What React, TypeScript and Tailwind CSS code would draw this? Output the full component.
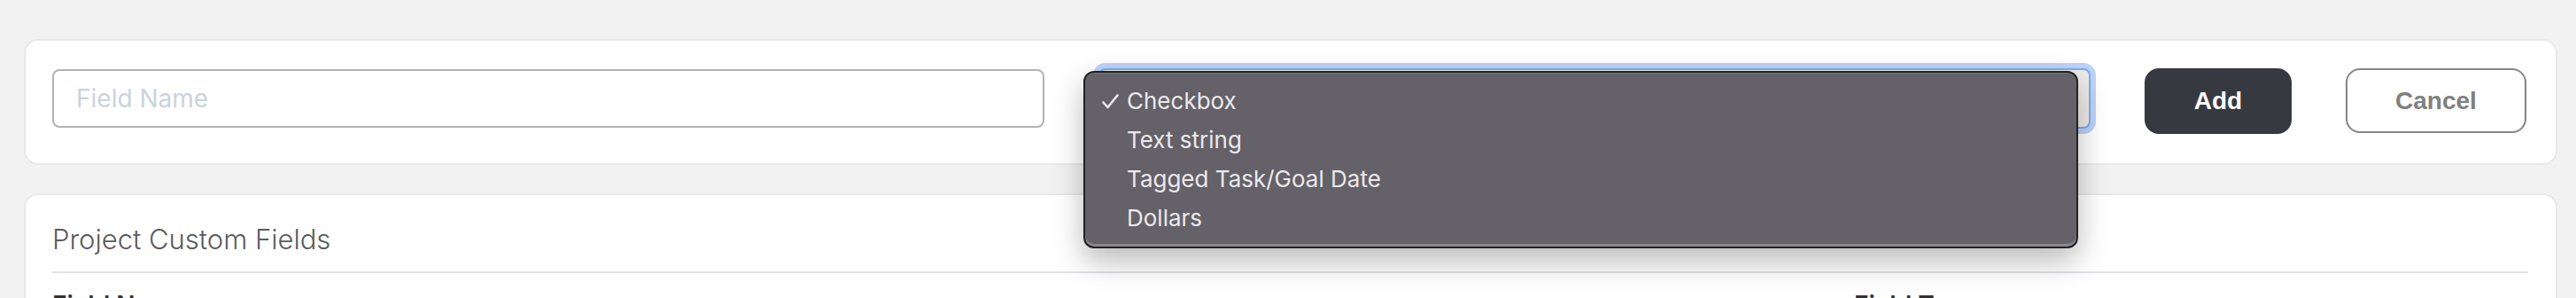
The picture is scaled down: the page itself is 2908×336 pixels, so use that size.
import { useState } from "react";

/* ----------------------------------------
   DATA
----------------------------------------- */

const fieldTypes = ["Checkbox", "Text string", "Tagged Task/Goal Date", "Dollars"];

/* ----------------------------------------
   COMPONENT
----------------------------------------- */

const App = () => {
  const [selected] = useState("Checkbox");

  return (
    <div className="min-h-screen bg-[#f2f2f2] pl-[27px] pr-[21px] pt-[44px] font-['Inter',sans-serif]">
      {/* =======================
          ADD FIELD CARD
      ======================== */}
      <div className="flex items-start gap-[61px] rounded-[16px] border-2 border-[#e8e8e8] bg-white pl-[30px] pr-[32px] pt-[31px] pb-[33px]">
        <input
          type="text"
          placeholder="Field Name"
          className="mt-px h-[66px] w-[1120px] shrink-0 rounded-[8px] border-2 border-[#b3b3b3] bg-white px-[25px] text-[28px] text-[#333] outline-none placeholder:text-[#cbd2dc]"
        />

        {/* native select, shown open */}
        <div className="relative h-[68px] w-[1120px] shrink-0">
          <div className="h-full rounded-[8px] border-2 border-[#7eaaf0] bg-[#efece9] shadow-[0_0_0_6px_#bcd3f7]" />

          <div
            role="listbox"
            className="absolute -left-[17px] top-[3px] z-10 w-[1123px] rounded-[12px] border-2 border-[#222] bg-[#646168] pt-[10px] pb-[10px] shadow-[inset_0_-3px_0_#8a888d,inset_0_1px_0_#77757a,0_14px_34px_rgba(0,0,0,0.28)]"
          >
            {fieldTypes.map((type) => (
              <div
                key={type}
                role="option"
                aria-selected={type === selected}
                className="flex h-[44px] items-center text-[26px] leading-[44px] text-[#ebe9ec]"
              >
                <span className="flex w-[47px] items-center pl-[19px]">
                  {type === selected && (
                    <svg width="19" height="17" viewBox="0 0 19 17" fill="none">
                      <path
                        d="M1.5 9.5 L6.5 15 L17.5 1.5"
                        stroke="#ebe9ec"
                        strokeWidth="2.6"
                        strokeLinecap="round"
                        strokeLinejoin="round"
                      />
                    </svg>
                  )}
                </span>
                <span>{type}</span>
              </div>
            ))}
          </div>
        </div>

        <button className="h-[74px] w-[166px] shrink-0 rounded-[16px] bg-[#373940] font-['Liberation_Sans',sans-serif] text-[28px] font-bold text-white">
          Add
        </button>

        <button className="h-[73px] w-[204px] shrink-0 rounded-[16px] border-2 border-[#858585] bg-white font-['Liberation_Sans',sans-serif] text-[28px] font-bold text-[#808080]">
          Cancel
        </button>
      </div>

      {/* =======================
          CUSTOM FIELDS LIST
      ======================== */}
      <div className="mt-[32px] rounded-[16px] border-2 border-[#e8e8e8] bg-white pl-[30px] pr-[31px] pt-[30px]">
        <h2 className="border-b-2 border-[#dfe2e6] pb-[16px] text-[31px] font-light leading-[40px] text-[#5c5c5c]">
          Project Custom Fields
        </h2>

        <div className="grid grid-cols-[2034px_1fr] pt-[15px] text-[28px] font-semibold leading-[42px] text-[#333]">
          <div>Field Name</div>
          <div>Field Type</div>
        </div>
      </div>
    </div>
  );
};

export default App;
